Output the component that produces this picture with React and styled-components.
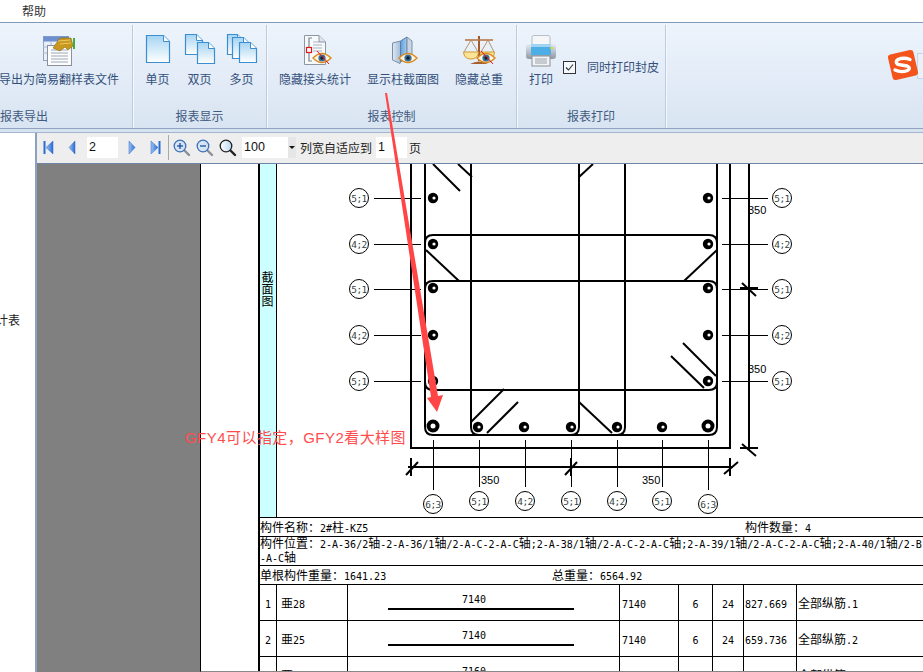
import React from "react";
import styled, { createGlobalStyle } from "styled-components";

const Global = createGlobalStyle`
  html, body { margin: 0; padding: 0; background: #fff; }
  body { font-family: "Noto Sans CJK SC", "Liberation Sans", sans-serif; }
  #root { width: 923px; height: 672px; overflow: hidden; }
`;

const CJK = `"Noto Sans CJK SC", "Noto Sans", sans-serif`;
const MONO = `"DejaVu Sans Mono", "Liberation Mono", monospace`;

const Shell = styled.div`
  position: relative; width: 923px; height: 672px; overflow: hidden;
  display: flex; flex-direction: column; background: #fff;
`;
const MenuBar = styled.div`
  height: 22px; flex: none; padding-left: 22px; display: flex; align-items: center;
  font: 12px/20px ${CJK}; color: #333;
`;
const Ribbon = styled.div`
  flex: none; height: 111px; box-sizing: border-box; padding-bottom: 3px;
  border-top: 1px solid #7f99bb; border-bottom: 1px solid #a3b6d0; background: #d7e2f0;
  position: relative;
`;
const RibbonBody = styled.div`
  height: 106px; box-sizing: border-box; display: flex; border-bottom: 1px solid #90a4c0;
  background: linear-gradient(#edf4fc, #d9e4f2);
`;
const Group = styled.div`
  flex: none; width: ${p => p.$w}px; box-sizing: border-box; margin-top: 2px;
  display: flex; flex-direction: column;
  border-right: 1px solid #bccbde; box-shadow: 1px 0 0 #f5f9fe;
`;
const GroupBody = styled.div`
  height: 80px; box-sizing: border-box; flex: none;
  padding: 10px 0 0 ${p => p.$pad || 0}px; margin-left: ${p => p.$shift || 0}px;
  display: flex; gap: ${p => p.$gap || 0}px; justify-content: ${p => p.$center ? "center" : "flex-start"};
`;
const GroupLabel = styled.div`
  height: 22px; font: 12px/22px ${CJK}; color: #3f5b80; white-space: nowrap;
  text-align: ${p => p.$left ? "left" : "center"};
`;
const Item = styled.div`
  flex: none; width: ${p => p.$w}px; display: flex; flex-direction: column; align-items: center;
`;
const IconBox = styled.svg`
  width: 32px; height: 32px; flex: none; display: block; overflow: visible;
`;
const ItemLabel = styled.div`
  margin-top: 2px; font: 12px/20px ${CJK}; color: #34507a; white-space: nowrap;
`;
const CheckRow = styled.div`
  display: flex; align-items: center; height: 20px; margin: 22px 0 0 10px;
  font: 12px/20px ${CJK}; color: #34507a; white-space: nowrap;
`;
const CheckMark = styled.span`
  width: 11px; height: 11px; border: 1px solid #333; margin-right: 11px; flex: none;
  display: flex; align-items: center; justify-content: center; background: #f4f7fb;
`;
const ImeBar = styled.div`
  position: absolute; left: 887px; top: 26px; height: 32px; width: 60px;
  display: flex; align-items: center;
`;
const ImeTail = styled.div`
  position: absolute; left: 30px; top: 4px; width: 30px; height: 24px;
  background: #eaf1f9; border: 1px solid #c6d5e7;
`;
const Main = styled.div`
  flex: 1; min-height: 0; display: flex;
`;
const Sidebar = styled.div`
  width: 35px; flex: none; overflow: hidden; position: relative;
`;
const TreeLabel = styled.div`
  margin: 177px 0 0 -4px; font: 12px/20px ${CJK}; color: #222; white-space: nowrap;
`;
const Viewer = styled.div`
  flex: 1; min-width: 0; display: flex; flex-direction: column;
  border-left: 2px solid #8ba1c1;
`;
const Toolbar = styled.div`
  height: 29px; flex: none; box-sizing: content-box; background: #eeeeee;
  border-bottom: 1px solid #6d84a3; display: flex; align-items: center; padding: 0 0 1px 3px;
`;
const ToolBtn = styled.span`
  flex: none; width: ${p => p.$w}px; height: 24px; display: flex; align-items: center; justify-content: center;
`;
const ToolInput = styled.span`
  flex: none; width: ${p => p.$w}px; height: 21px; background: #fff; box-sizing: border-box;
  padding-left: 2px; margin-left: ${p => p.$ml || 0}px;
  font: 12.5px/21px "Liberation Sans", sans-serif; color: #111;
`;
const ToolSep = styled.span`
  flex: none; width: 1px; height: 25px; background: #a9a9a9; margin: 0 1px 0 1px;
`;
const ComboArrow = styled.span`
  flex: none; width: 8px; height: 21px; background: #e6e6e6; position: relative; margin-right: 4px;
  &::after {
    content: ""; position: absolute; left: 1px; top: 9px;
    border: 3px solid transparent; border-top: 3px solid #111; border-bottom: 0;
  }
`;
const ToolText = styled.span`
  flex: none; font: 12px/20px ${CJK}; color: #222; margin-left: ${p => p.$ml || 0}px; white-space: nowrap;
`;
const DocArea = styled.div`
  flex: 1; min-height: 0; display: flex; overflow: hidden; position: relative;
`;
const Backdrop = styled.div`
  width: 163px; flex: none; background: #808080;
`;
const Page = styled.div`
  flex: 1; min-width: 0; border-left: 1px solid #000; padding-left: 57px; background: #fff; overflow: hidden;
  border-bottom: 1px solid #888;
`;
const Sheet = styled.div`
  border-left: 2px solid #000; width: 700px; color: #000;
`;
const DrawingRow = styled.div`
  height: 353px; display: flex; border-bottom: 1px solid #000; overflow: hidden;
`;
const SideCell = styled.div`
  width: 16px; flex: none; background: #ccffff; border-right: 1px solid #000;
  display: flex; justify-content: center; padding-top: 107px; box-sizing: content-box;
`;
const SideText = styled.div`
  writing-mode: vertical-rl; font: 12px/16px ${CJK}; height: 40px; margin-left: -2px;
`;
const Drawing = styled.svg`
  display: block; flex: none; width: 646px; height: 353px;
`;
const InfoRow = styled.div`
  height: ${p => p.$h}px; box-sizing: content-box; border-bottom: 1px solid #000; position: relative;
  white-space: nowrap; overflow: hidden; font: 12px/${p => p.$lh || p.$h}px ${CJK};
  display: flex;
`;
const InfoCell = styled.span`
  flex: none; width: ${p => p.$w ? p.$w + "px" : "auto"};
`;
const Latin = styled.span`
  font-family: ${MONO}; font-size: 10px;
`;
const BarRow = styled.div`
  height: 35px; display: grid; border-bottom: 1px solid #000;
  grid-template-columns: 17px 71px 272px 59px 34px 31px 53px 1fr;
`;
const BarCell = styled.div`
  border-right: 1px solid #000; font: 12px/35px ${CJK}; white-space: nowrap; overflow: hidden;
  text-align: ${p => p.$center ? "center" : "left"};
  padding-left: ${p => p.$pad || 0}px;
  &:last-child { border-right: 0; }
`;
const ShapeCell = styled.div`
  border-right: 1px solid #000; position: relative; display: flex; flex-direction: column; align-items: center;
`;
const ShapeText = styled.div`
  font: 10px/12px ${MONO}; margin: 9px 0 0 -19px;
`;
const ShapeLine = styled.div`
  width: 186px; height: 2px; background: #000; margin: 2px 0 0 -5px;
`;
const Notes = styled.svg`
  position: absolute; left: 0; top: 0; width: 923px; height: 672px; pointer-events: none;
`;
const RedNote = styled.div`
  position: absolute; left: 185px; top: 428px; font: 15px/20px "Liberation Sans", ${CJK};
  color: #ff4d4d; letter-spacing: 0.45px; white-space: nowrap;
`;

const mix = (s) =>
  s.split(/([\x00-\x7F]+)/).filter(Boolean).map((p, i) =>
    /^[\x00-\x7F]+$/.test(p) ? <Latin key={i}>{p}</Latin> : <React.Fragment key={i}>{p}</React.Fragment>
  );

const PageSheet = ({ x, y, w, h, id }) => (
  <g>
    <path d={`M${x} ${y}H${x + w - 6}L${x + w} ${y + 6}V${y + h}H${x}Z`} fill={`url(#${id})`} stroke="#3b8fd0" strokeWidth="1.2" />
    <path d={`M${x + w - 6} ${y}V${y + 6}H${x + w}`} fill="#fff" stroke="#3b8fd0" />
  </g>
);
const PageGrad = ({ id }) => (
  <defs>
    <linearGradient id={id} x1="0" y1="0" x2="0" y2="1">
      <stop offset="0" stopColor="#a5d4f2" />
      <stop offset="1" stopColor="#ffffff" />
    </linearGradient>
  </defs>
);
const Eye = ({ x, y, struck }) => (
  <g>
    <path d={`M${x - 9} ${y}Q${x} ${y - 9} ${x + 9} ${y}Q${x} ${y + 9} ${x - 9} ${y}Z`} fill="#fbf3dc" stroke="#d98a1e" strokeWidth="1.4" />
    <circle cx={x} cy={y} r="3.6" fill="#3a6f9a" />
    <circle cx={x} cy={y} r="1.7" fill="#10202e" />
    {struck && <path d={`M${x - 5} ${y - 7}L${x + 7} ${y + 6}`} stroke="#e8141c" strokeWidth="1" />}
  </g>
);

const IconExport = () => (
  <IconBox viewBox="0 0 32 32">
    <rect x="0.5" y="1.5" width="25" height="24" fill="#e9eff8" stroke="#8fa3c0" />
    <rect x="0.5" y="1.5" width="25" height="5" fill="#6d8fd0" />
    <path d="M0 12H26M0 18H26M8 6V26" stroke="#a9bad0" />
    <rect x="4.5" y="10.5" width="24" height="20" fill="#fdfdfd" stroke="#8c9099" />
    <path d="M8 15H25M8 18H25M8 21H25M8 24H25M8 27H25" stroke="#9aa7b8" />
    <path d="M10 13L17 3H28L30 11L25 15L22 12L17 16Z" fill="#c9981f" stroke="#8a6510" strokeWidth=".6" />
    <path d="M15 6L27 5M17 9L28 8" stroke="#ebca62" />
    <rect x="30" y="3" width="2" height="11" fill="#3fae3c" />
  </IconBox>
);
const IconSingle = () => (
  <IconBox viewBox="0 0 32 32">
    <PageGrad id="p1" />
    <PageSheet x={4.5} y={0.5} w={23} h={27} id="p1" />
  </IconBox>
);
const IconDouble = () => (
  <IconBox viewBox="0 0 32 32">
    <PageGrad id="p2" />
    <PageSheet x={1.5} y={-0.5} w={17} h={20} id="p2" />
    <PageSheet x={13.5} y={7.5} w={17} h={21} id="p2" />
  </IconBox>
);
const IconMulti = () => (
  <IconBox viewBox="0 0 32 32">
    <PageGrad id="p3" />
    <PageSheet x={1.5} y={-0.5} w={16} h={20} id="p3" />
    <PageSheet x={6.5} y={2.5} w={17} h={21} id="p3" />
    <PageSheet x={13.5} y={7.5} w={17} h={20} id="p3" />
  </IconBox>
);
const IconJoint = () => (
  <IconBox viewBox="0 0 32 32">
    <path d="M5.5 .5H20L26.500 7V29.500H5.500Z" fill="#f8f9fb" stroke="#8d96a5" />
    <path d="M20 .5V7H26.500" fill="#dfe5ee" stroke="#8d96a5" />
    <path d="M13 3H10V26H13" fill="none" stroke="#7a8594" strokeWidth="1.2" />
    <path d="M14 7H20M14 10H23M14 13H23M14 16H23" stroke="#a9b3c0" />
    <rect x="7.500" y="12.500" width="5" height="5" fill="#fff" stroke="#e01818" strokeWidth="1.2" />
    <Eye x={23} y={23} struck />
  </IconBox>
);
const IconColumn = () => (
  <IconBox viewBox="0 0 32 32">
    <defs>
      <linearGradient id="c1" x1="0" y1="0" x2="1" y2="0">
        <stop offset="0" stopColor="#dfe9f3" /><stop offset="1" stopColor="#9fbbd6" />
      </linearGradient>
      <linearGradient id="c2" x1="0" y1="0" x2="1" y2="0">
        <stop offset="0" stopColor="#5f9fde" /><stop offset="1" stopColor="#a8cdee" />
      </linearGradient>
    </defs>
    <path d="M5.500 8L13.500 6V27L13 28.500L5.500 25Z" fill="url(#c1)" stroke="#7d8fa5" />
    <path d="M13.500 6L20 2V22L13.500 27Z" fill="url(#c2)" stroke="#5d7ea6" />
    <path d="M20 2L25 6V22H20Z" fill="#c9d6e3" stroke="#7d8fa5" />
    <Eye x={21} y={23} />
  </IconBox>
);
const IconScale = () => (
  <IconBox viewBox="0 0 32 32">
    <path d="M16 1V26" stroke="#a4592a" strokeWidth="2" />
    <path d="M2 5H30" stroke="#b9764a" strokeWidth="1.600" />
    <path d="M8 5L1 17M8 5L15 17M25 5L18 17M25 5L31 17" stroke="#b08a62" strokeWidth=".9" fill="none" />
    <path d="M.5 17H15.500Q15 24 8 24Q1 24 .5 17Z" fill="#fbe39a" stroke="#d49a2b" />
    <path d="M17.500 17H31.500Q31 24 25 24Q18 24 17.500 17Z" fill="#fbe39a" stroke="#d49a2b" />
    <path d="M7 29Q16 24 25 29Z" fill="#a75f2e" />
    <Eye x={23} y={23} struck />
  </IconBox>
);
const IconPrinter = () => (
  <IconBox viewBox="0 0 32 32">
    <defs>
      <linearGradient id="pr" x1="0" y1="0" x2="0" y2="1">
        <stop offset="0" stopColor="#e6ebf0" /><stop offset="1" stopColor="#8f98a3" />
      </linearGradient>
    </defs>
    <rect x="7" y="0.500" width="18" height="11" rx="2" fill="#f4f6f8" stroke="#b6bec8" />
    <rect x="1" y="9" width="30" height="15" rx="3" fill="url(#pr)" />
    <rect x="6" y="9" width="20" height="11" fill="#4daee6" />
    <rect x="6" y="9" width="20" height="3" fill="#9ed4f2" />
    <rect x="25" y="12" width="3" height="2" fill="#c4d65a" />
    <rect x="7" y="21" width="18" height="10" fill="#f3f4f6" stroke="#8a8f96" />
    <path d="M10 24H22M10 26H22M10 28H22" stroke="#9aa1aa" />
  </IconBox>
);
const SogouLogo = () => (
  <svg width="32" height="32" viewBox="0 0 32 32" style={{ position: "relative", zIndex: 1 }}>
    <rect x="3" y="3" width="26" height="26" rx="3" fill="#f2541b" transform="rotate(-13 16 16)" />
    <path d="M23 10.500Q17 8 11 10.500Q7.500 13 11 15.500L20 17Q24.500 19 20.500 21.500Q14 24 8 21" fill="none" stroke="#fff" strokeWidth="3.400" strokeLinecap="round" />
  </svg>
);
const Nav = ({ dir, edge }) => (
  <svg width="11" height="15" viewBox="0 0 11 15">
    <defs>
      <linearGradient id={`n${dir}${edge ? 1 : 0}`} x1="0" y1="0" x2="1" y2="0">
        <stop offset="0" stopColor="#9cc3f0" /><stop offset="1" stopColor="#2c6bd0" />
      </linearGradient>
    </defs>
    {dir === "l" ? (
      <>
        {edge && <rect x="0.500" y="1" width="2" height="13" fill="#2c6bd0" />}
        <path d={edge ? "M10 1V14L3 7.500Z" : "M8 1V14L2 7.500Z"} fill={`url(#n${dir}${edge ? 1 : 0})`} stroke="#2c6bd0" strokeWidth=".5" />
      </>
    ) : (
      <>
        {edge && <rect x="8.500" y="1" width="2" height="13" fill="#2c6bd0" />}
        <path d={edge ? "M1 1V14L8 7.500Z" : "M3 1V14L9 7.500Z"} fill={`url(#n${dir}${edge ? 1 : 0})`} stroke="#2c6bd0" strokeWidth=".5" />
      </>
    )}
  </svg>
);
const Zoom = ({ sign }) => (
  <svg width="18" height="18" viewBox="0 0 18 18">
    <path d="M10.500 10.500L16 16" stroke={sign ? "#8b8f96" : "#222"} strokeWidth="2.400" strokeLinecap="round" />
    <defs>
      <linearGradient id={`z${sign || "n"}`} x1="0" y1="0" x2="1" y2="0">
        <stop offset="0" stopColor={sign ? "#dbe9f8" : "#ffffff"} /><stop offset="1" stopColor={sign ? "#cfe0f5" : "#b8d9ee"} />
      </linearGradient>
    </defs>
    <circle cx="7" cy="7" r="5.800" fill={`url(#z${sign || "n"})`} stroke={sign ? "#3f6fb5" : "#222"} strokeWidth="1.300" />
    {sign && <path d="M4 7H10" stroke="#1d4f9c" strokeWidth="1.300" />}
    {sign === "+" && <path d="M7 4V10" stroke="#1d4f9c" strokeWidth="1.300" />}
  </svg>
);

const Callout = ({ x, y, label }) => (
  <g>
    <circle cx={x} cy={y} r="9.500" fill="#fff" stroke="#000" strokeWidth="1" />
    <text x={x} y={y + 3.500} textAnchor="middle" fontFamily={MONO} fontSize="9.500" letterSpacing="-.6" fill="#344">{label}</text>
  </g>
);
const Bar = ({ x, y, big }) => big ? (
  <g>
    <circle cx={x} cy={y} r="6.500" fill="#000" />
    <circle cx={x} cy={y} r="2.500" fill="#fff" />
  </g>
) : (
  <g>
    <circle cx={x} cy={y} r="5.200" fill="#000" />
    <circle cx={x + 1} cy={y} r="1.600" fill="#fff" />
  </g>
);

const sideRows = [[198, "5;1"], [244, "4;2"], [289, "5;1"], [335, "4;2"], [381, "5;1"]];
const bottomRows = [[433, 504, "6;3", 490], [479, 501, "5;1", 487], [525, 501, "4;2", 487], [571, 501, "5;1", 487], [617, 501, "4;2", 487], [662, 501, "5;1", 487], [708, 504, "6;3", 490]];
const barsLeft = [198, 244, 288, 335, 381];
const barsBottom = [478, 524, 571, 617, 662];

const heavy = [
  "M411 164V448H730V164",
  "M425 164V427Q425 435 433 435H709Q717 435 717 427V164",
  "M425 243Q425 235 433 235H709Q717 235 717 243",
  "M425 289Q425 281 433 281H709Q717 281 717 289",
  "M425 382Q425 390 433 390H709Q717 390 717 382",
  "M471 164V427Q471 435 479 435",
  "M579 164V427Q579 435 571 435",
  "M625 164V427Q625 435 617 435",
  "M749 164V450",
  "M408 467H733",
  "M433 164L460 191", "M458 164L472 177", "M579 177L593 164",
  "M426 250L459 281", "M717 250L684 281",
  "M683 343L716 376", "M671 356L704 388",
  "M471 422L504 389", "M487 433L518 402", "M579 402L612 433",
  "M411 458V476M406 475L418 462",
  "M571 458V476M565 475L577 462",
  "M730 458V476M724 474L738 462",
  "M740 288H758M742 283L756 296",
  "M740 448H758M742 444L756 456",
];

const DrawingArt = () => (
  <Drawing viewBox="277 164 646 353">
    <g fill="none" stroke="#000" strokeWidth="2">
      {heavy.map((d) => <path key={d} d={d} />)}
    </g>
    <g stroke="#000" strokeWidth="1">
      {sideRows.map(([y]) => (
        <React.Fragment key={y}>
          <path d={`M374 ${y + .5}H421`} />
          <path d={`M722 ${y + .5}H768`} />
        </React.Fragment>
      ))}
      {bottomRows.map(([x, , , end]) => <path key={x} d={`M${x + .5} 440V${end}`} />)}
    </g>
    {barsLeft.map((y) => <React.Fragment key={y}><Bar x={433} y={y} /><Bar x={708} y={y} /></React.Fragment>)}
    <Bar x={433} y={426} big />
    <Bar x={708} y={426} big />
    {barsBottom.map((x) => <Bar key={x} x={x} y={427} />)}
    {sideRows.map(([y, l]) => (
      <React.Fragment key={y}>
        <Callout x={359} y={y} label={l} />
        <Callout x={782} y={y} label={l} />
      </React.Fragment>
    ))}
    {bottomRows.map(([x, y, l]) => <Callout key={x} x={x} y={y} label={l} />)}
    <g fontFamily='"Liberation Sans", sans-serif' fontSize="11" fill="#000">
      <text x="748" y="214">350</text>
      <text x="748" y="373">350</text>
      <text x="481" y="484">350</text>
      <text x="642" y="484">350</text>
    </g>
  </Drawing>
);

const bars = [
  ["1", "亜28", "7140", "7140", "6", "24", "827.669", "全部纵筋.1"],
  ["2", "亜25", "7140", "7140", "6", "24", "659.736", "全部纵筋.2"],
  ["3", "亜25", "7160", "7160", "6", "24", "661.574", "全部纵筋.3"],
];

export default function App() {
  return (
    <Shell>
      <Global />
      <MenuBar>帮助</MenuBar>
      <Ribbon>
        <RibbonBody>
          <Group $w={133}>
            <GroupBody $shift={-1}>
              <Item $w={120}><IconExport /><ItemLabel>导出为简易翻样表文件</ItemLabel></Item>
            </GroupBody>
            <GroupLabel $left>报表导出</GroupLabel>
          </Group>
          <Group $w={134}>
            <GroupBody $center>
              <Item $w={42}><IconSingle /><ItemLabel>单页</ItemLabel></Item>
              <Item $w={42}><IconDouble /><ItemLabel>双页</ItemLabel></Item>
              <Item $w={42}><IconMulti /><ItemLabel>多页</ItemLabel></Item>
            </GroupBody>
            <GroupLabel>报表显示</GroupLabel>
          </Group>
          <Group $w={250}>
            <GroupBody $pad={12} $gap={16}>
              <Item $w={72}><IconJoint /><ItemLabel>隐藏接头统计</ItemLabel></Item>
              <Item $w={72}><IconColumn /><ItemLabel>显示柱截面图</ItemLabel></Item>
              <Item $w={48}><IconScale /><ItemLabel>隐藏总重</ItemLabel></Item>
            </GroupBody>
            <GroupLabel>报表控制</GroupLabel>
          </Group>
          <Group $w={149}>
            <GroupBody $pad={12}>
              <Item $w={24}><IconPrinter /><ItemLabel>打印</ItemLabel></Item>
              <CheckRow>
                <CheckMark>
                  <svg width="9" height="9" viewBox="0 0 9 9"><path d="M1 4.500L3.500 7L8 1.500" fill="none" stroke="#333" strokeWidth="1.100" /></svg>
                </CheckMark>
                同时打印封皮
              </CheckRow>
            </GroupBody>
            <GroupLabel>报表打印</GroupLabel>
          </Group>
        </RibbonBody>
        <ImeBar><ImeTail /><SogouLogo /></ImeBar>
      </Ribbon>
      <Main>
        <Sidebar><TreeLabel>计表</TreeLabel></Sidebar>
        <Viewer>
          <Toolbar>
            <ToolBtn $w={17}><Nav dir="l" edge /></ToolBtn>
            <ToolBtn $w={30}><Nav dir="l" /></ToolBtn>
            <ToolInput $w={31}>2</ToolInput>
            <ToolBtn $w={26}><Nav dir="r" /></ToolBtn>
            <ToolBtn $w={23}><Nav dir="r" edge /></ToolBtn>
            <ToolSep />
            <ToolBtn $w={23}><Zoom sign="+" /></ToolBtn>
            <ToolBtn $w={23}><Zoom sign="-" /></ToolBtn>
            <ToolBtn $w={23}><Zoom /></ToolBtn>
            <ToolInput $w={46} $ml={3}>100</ToolInput>
            <ComboArrow />
            <ToolText>列宽自适应到</ToolText>
            <ToolInput $w={31} $ml={4}>1</ToolInput>
            <ToolText $ml={2}>页</ToolText>
          </Toolbar>
          <DocArea>
            <Backdrop />
            <Page>
              <Sheet>
                <DrawingRow>
                  <SideCell><SideText>截面图</SideText></SideCell>
                  <DrawingArt />
                </DrawingRow>
                <InfoRow $h={18}>
                  <InfoCell $w={485}>{mix("构件名称：2#柱-KZ5")}</InfoCell>
                  <InfoCell>{mix("构件数量：4")}</InfoCell>
                </InfoRow>
                <InfoRow $h={28} $lh={12}>
                  <InfoCell>
                    {mix("构件位置：2-A-36/2轴-2-A-36/1轴/2-A-C-2-A-C轴;2-A-38/1轴/2-A-C-2-A-C轴;2-A-39/1轴/2-A-C-2-A-C轴;2-A-40/1轴/2-B-")}
                    <br />
                    {mix("-A-C轴")}
                  </InfoCell>
                </InfoRow>
                <InfoRow $h={18}>
                  <InfoCell $w={292}>{mix("单根构件重量：1641.23")}</InfoCell>
                  <InfoCell>{mix("总重量：6564.92")}</InfoCell>
                </InfoRow>
                {bars.map((b) => (
                  <BarRow key={b[0]}>
                    <BarCell $center><Latin>{b[0]}</Latin></BarCell>
                    <BarCell $pad={4}>{mix(b[1])}</BarCell>
                    <ShapeCell>
                      <ShapeText>{b[2]}</ShapeText>
                      <ShapeLine />
                    </ShapeCell>
                    <BarCell $pad={2}><Latin>{b[3]}</Latin></BarCell>
                    <BarCell $center><Latin>{b[4]}</Latin></BarCell>
                    <BarCell $center><Latin>{b[5]}</Latin></BarCell>
                    <BarCell $pad={1}><Latin>{b[6]}</Latin></BarCell>
                    <BarCell $pad={1}>{mix(b[7])}</BarCell>
                  </BarRow>
                ))}
              </Sheet>
            </Page>
          </DocArea>
        </Viewer>
      </Main>
      <Notes viewBox="0 0 923 672">
        <path d="M385 93L387 93L438 396L443 395L437 412L427 398L431 397Z" fill="#ff4545" />
      </Notes>
      <RedNote>GFY4可以指定，GFY2看大样图</RedNote>
    </Shell>
  );
}
